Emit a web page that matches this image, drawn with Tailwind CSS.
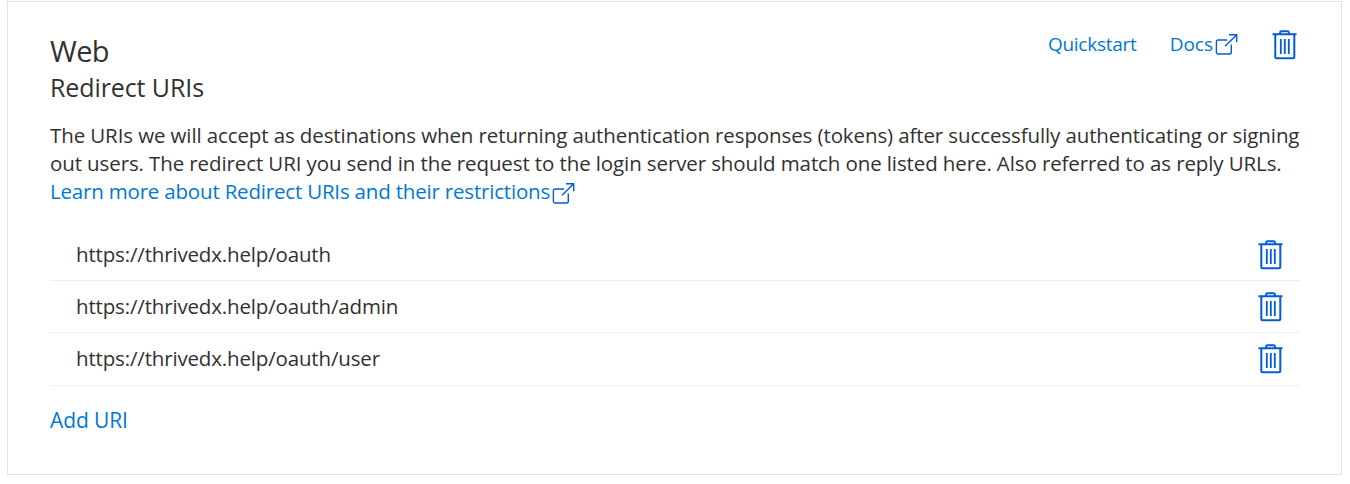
<!DOCTYPE html>
<html lang="en">
<head>
<meta charset="utf-8">
<title>Redirect URIs</title>
<script src="https://cdn.jsdelivr.net/npm/@tailwindcss/browser@4"></script>
</head>
<body class="bg-white font-['Open_Sans',sans-serif] text-[#323130]">
<svg class="hidden">
  <symbol id="trash" viewBox="0 0 26 32">
    <g fill="none" stroke="currentColor" stroke-width="2">
      <path d="M.5 5.300h24M8.100 5V3.600a1.400 1.400 0 0 1 1.400-1.400h6a1.400 1.400 0 0 1 1.400 1.400V5M3.300 5.500v22.300a1.500 1.500 0 0 0 1.500 1.500h16a1.500 1.500 0 0 0 1.500-1.500V5.500"/>
      <path stroke-width="1.800" d="M8.800 10v15M12.800 10v15M16.800 10v15"/>
    </g>
  </symbol>
  <symbol id="ext" viewBox="0 0 23 23">
    <path fill="none" stroke="currentColor" stroke-width="1.400" d="M12 7H3.200a1.800 1.800 0 0 0-1.800 1.800v10.400A1.800 1.800 0 0 0 3.200 21h11.300a1.800 1.800 0 0 0 1.800-1.800V11.500M10 13.300L21.500 2M14 1.700h7.700V9.300"/>
  </symbol>
</svg>
<main class="ml-[7px] mt-px h-[474px] w-[1335px] border border-[#e1e1e1] pl-[42px] pr-[41px] pt-[29px]">
  <header class="flex h-[76px] justify-between">
    <div>
      <h1 class="h-[39px] text-[29px] leading-[39px]"><span class="tracking-[-0.6px]">Web</span></h1>
      <h2 class="h-[35px] text-[25px] leading-[35px]"><span class="tracking-[-0.1px]">Redirect URIs</span></h2>
    </div>
    <nav class="flex h-[28px] items-center text-[19px] text-[#0078d4]">
      <a class="pb-[2px]"><span class="tracking-[-0.25px]">Quickstart</span></a>
      <a class="ml-[33px] flex items-center pb-[2px]"><span>Docs</span><svg class="ml-[2px] size-[23px] text-[#015cda]"><use href="#ext"/></svg></a>
      <svg class="ml-[34px] mr-[2px] h-8 w-[26px] text-[#015cda]"><use href="#trash"/></svg>
    </nav>
  </header>
  <div class="mt-[14px] h-[108px] whitespace-nowrap text-[20.5px] leading-7">
    <p class="h-7 tracking-[-0.108px]">The URIs we will accept as destinations when returning authentication responses (tokens) after successfully authenticating or signing</p>
    <p class="h-7 tracking-[-0.108px]">out users. The redirect URI you send in the request to the login server should match one listed here. Also referred to as reply URLs.</p>
    <a class="flex text-[#0078d4]"><span class="tracking-[-0.19px]">Learn more about Redirect URIs and their restrictions</span><svg class="ml-[2px] mt-[5px] size-[23px] text-[#015cda]"><use href="#ext"/></svg></a>
  </div>
  <ul class="text-[20.5px] leading-7 tracking-[-0.16px]">
    <li class="flex h-[52px] items-center justify-between border-b border-[#f0efee] pl-[26px] pr-4"><span class="pb-[2px]">https://thrivedx.help/oauth</span><svg class="h-8 w-[26px] text-[#015cda]"><use href="#trash"/></svg></li>
    <li class="flex h-[52px] items-center justify-between border-b border-[#f0efee] pl-[26px] pr-4"><span class="pb-[2px]">https://thrivedx.help/oauth/admin</span><svg class="h-8 w-[26px] text-[#015cda]"><use href="#trash"/></svg></li>
    <li class="flex h-[53px] items-center justify-between border-b border-[#f0efee] pb-px pl-[26px] pr-4"><span class="pb-[2px]">https://thrivedx.help/oauth/user</span><svg class="h-8 w-[26px] text-[#015cda]"><use href="#trash"/></svg></li>
  </ul>
  <a class="mt-5 block text-[21px] leading-7 tracking-[-0.1px] text-[#0078d4]">Add URI</a>
</main>
</body>
</html>
